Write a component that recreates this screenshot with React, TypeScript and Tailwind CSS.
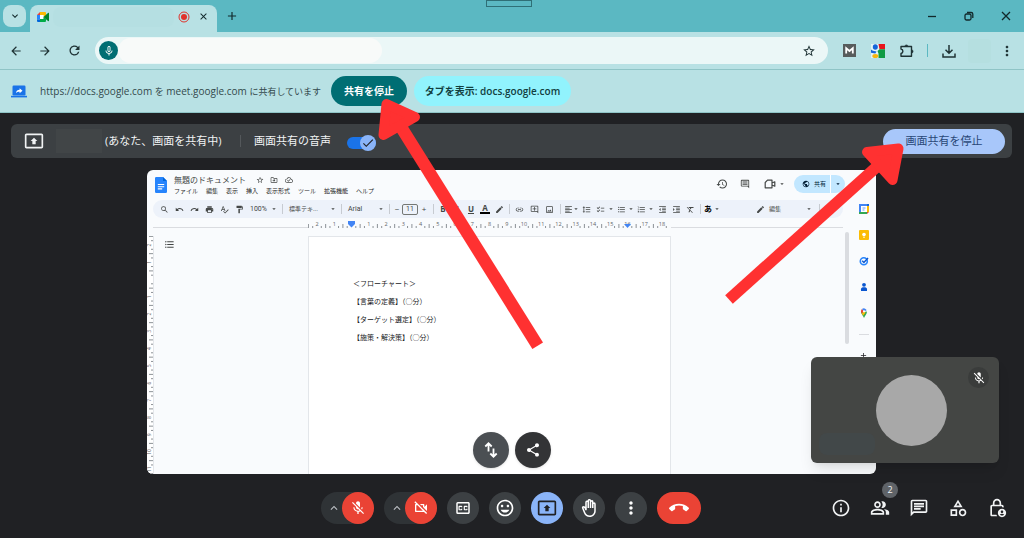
import React from 'react';
import {
  MdAdd,
  MdArrowBack,
  MdArrowDropDown,
  MdArrowForward,
  MdCallEnd,
  MdCheck,
  MdChecklist,
  MdClose,
  MdCreate,
  MdExpandLess,
  MdExpandMore,
  MdFormatAlignLeft,
  MdFormatClear,
  MdFormatIndentDecrease,
  MdFormatIndentIncrease,
  MdFormatLineSpacing,
  MdFormatListBulleted,
  MdFormatListNumbered,
  MdFormatPaint,
  MdHistory,
  MdInfoOutline,
  MdInsertEmoticon,
  MdLink,
  MdMicNone,
  MdMicOff,
  MdMoreVert,
  MdOutlineAddComment,
  MdOutlineBackHand,
  MdOutlineCategory,
  MdOutlineChat,
  MdOutlineClosedCaption,
  MdOutlineCloudDone,
  MdOutlineComment,
  MdOutlineDriveFileMove,
  MdOutlineImage,
  MdOutlineLockPerson,
  MdOutlinePeopleAlt,
  MdOutlinePresentToAll,
  MdOutlineVideocamOff,
  MdPrint,
  MdPublic,
  MdRedo,
  MdRefresh,
  MdSearch,
  MdShare,
  MdSpellcheck,
  MdStarBorder,
  MdUndo,
} from 'react-icons/md';
import type { IconType } from 'react-icons';

interface IconButtonProps {
  label: string;
  className?: string;
  children: React.ReactNode;
}

const IconButton: React.FC<IconButtonProps> = ({ label, className = '', children }) => (
  <button type="button" aria-label={label} className={`flex shrink-0 items-center justify-center ${className}`}>
    {children}
  </button>
);

const MeetLogo: React.FC = () => (
  <svg viewBox="0 0 24 20" className="h-[10px] w-3" aria-hidden="true">
    <path d="M0 6 6 0v6z" fill="#ea4335" />
    <path d="M0 6h6v9H0z" fill="#2684fc" />
    <path d="M0 15h6v5H2a2 2 0 0 1-2-2z" fill="#0066da" />
    <path d="M6 0h10a2 2 0 0 1 2 2v5l-5 4V6H6z" fill="#ffba00" />
    <path d="M6 6h7v8H6z" fill="#fff" />
    <path d="M6 14h7v-4l5 4v4a2 2 0 0 1-2 2H6z" fill="#00ac47" />
    <path d="m13 10 9-8c1-1 2 0 2 1v14c0 1-1 2-2 1z" fill="#00832d" />
  </svg>
);

const TabStrip: React.FC = () => (
  <header className="relative flex h-8 items-end bg-[#5bb8c2] text-[#12292b]">
    <IconButton label="タブを検索" className="mb-[5px] ml-[3px] h-[22px] w-[23px] rounded-lg bg-[#b8e1e4]">
      <MdExpandMore className="h-3 w-3" />
    </IconButton>
    <div className="ml-1 flex h-[27px] w-[187px] items-center rounded-t-lg bg-[#b8e1e4] pb-1 pl-[7px] pr-2">
      <MeetLogo />
      <span className="ml-1 h-5 flex-1 rounded-lg bg-[#b5dfe2]" />
      <svg viewBox="0 0 12 12" className="ml-1 h-3 w-3" aria-hidden="true">
        <circle cx="6" cy="6" r="5" fill="none" stroke="#e0322b" strokeWidth="1" />
        <circle cx="6" cy="6" r="3" fill="#e0322b" />
      </svg>
      <IconButton label="タブを閉じる" className="ml-2">
        <MdClose className="h-[11px] w-[11px]" />
      </IconButton>
    </div>
    <IconButton label="新しいタブ" className="mb-[9px] ml-2">
      <MdAdd className="h-[14px] w-[14px]" />
    </IconButton>
    <div className="mb-[11px] ml-auto mr-[13px] flex items-center gap-[27px]">
      <IconButton label="最小化">
        <svg viewBox="0 0 10 10" className="h-[10px] w-[10px]" stroke="currentColor" strokeWidth="1.3">
          <path d="M1 5.5h8" />
        </svg>
      </IconButton>
      <IconButton label="元に戻す">
        <svg viewBox="0 0 10 10" className="h-[10px] w-[10px]" fill="none" stroke="currentColor" strokeWidth="1.3">
          <rect x="1" y="3" width="6" height="6" rx="1.5" />
          <path d="M3 1.5h4.2A1.6 1.6 0 0 1 8.8 3v4" />
        </svg>
      </IconButton>
      <IconButton label="閉じる">
        <svg viewBox="0 0 10 10" className="h-[10px] w-[10px]" stroke="currentColor" strokeWidth="1.3">
          <path d="m1 1 8 8M9 1 1 9" />
        </svg>
      </IconButton>
    </div>
    <span className="absolute left-[486px] top-0 h-[7px] w-[46px] border border-[#2f6f76]" />
  </header>
);

const Toolbar: React.FC = () => (
  <nav className="flex h-[38px] items-center border-b border-[#8fc4c6] bg-[#b8e1e4] pl-[9px] pr-[9px] text-[#1f3335]">
    <div className="flex gap-[15px]">
      <IconButton label="戻る">
        <MdArrowBack className="h-[14px] w-[14px]" />
      </IconButton>
      <IconButton label="進む">
        <MdArrowForward className="h-[14px] w-[14px]" />
      </IconButton>
      <IconButton label="再読み込み">
        <MdRefresh className="h-[15px] w-[15px]" />
      </IconButton>
    </div>
    <div className="ml-[13px] flex h-[27px] min-w-0 flex-1 items-center rounded-full bg-[#ebf7f7] pl-1 pr-3">
      <span className="flex h-[19px] w-[19px] items-center justify-center rounded-full bg-[#006e73] text-white">
        <MdMicNone className="h-3 w-3" />
      </span>
      <input aria-label="アドレスバー" className="h-[25px] w-[264px] rounded-full bg-[#f8faf9] outline-none" />
      <IconButton label="ブックマーク" className="ml-auto">
        <MdStarBorder className="h-[14px] w-[14px]" />
      </IconButton>
    </div>
    <div className="ml-[15px] flex items-center">
      <svg viewBox="0 0 13 13" className="h-[13px] w-[13px]" aria-hidden="true">
        <rect width="13" height="13" fill="#575c5c" />
        <path d="M3.2 9.5V4.2L6.5 7l3.3-2.8v5.3" fill="none" stroke="#fff" strokeWidth="1.8" />
      </svg>
      <svg viewBox="0 0 14 14" className="ml-[15px] h-[14px] w-[14px]" aria-hidden="true">
        <path d="M0 0h14v14H0z" fill="#e4f3f5" />
        <path d="M7.5 0H14v5.200H8.500z" fill="#e8141c" />
        <path d="M14 5.200V14H7.500V9.500L6.500 7l2-1.800z" fill="#109a44" />
        <ellipse cx="4.300" cy="3" rx="2.500" ry="2.800" fill="#1565d8" />
        <path d="M0 5.500c2 1.800 4 1.500 5.500 2L4.300 9.500 0 8.800z" fill="#1565d8" />
        <ellipse cx="4.300" cy="11.900" rx="3" ry="2" fill="#f6b50e" />
      </svg>
      <IconButton label="拡張機能" className="ml-[15px]">
        <svg viewBox="0 0 14 14" className="h-[14px] w-[14px]" fill="none" stroke="currentColor" strokeWidth="1.4">
          <path d="M1 2.5h10.5v9.8H1V9.5c2.5-.5 2.5-4 0-4.5z" strokeLinejoin="round" />
          <path d="M4.8 2.5a1.6 1.6 0 0 1 3.2 0zM11.5 5.8a1.6 1.6 0 0 1 0 3.2z" fill="currentColor" strokeWidth="0.6" />
        </svg>
      </IconButton>
      <span className="ml-[13px] h-[13px] w-px bg-[#5bb8c2]" />
      <IconButton label="ダウンロード" className="ml-[14px]">
        <svg viewBox="0 0 14 14" className="h-[14px] w-[14px]" fill="none" stroke="currentColor" strokeWidth="1.5">
          <path d="M7 1v8M3.5 5.8 7 9.3l3.5-3.5M1 9.5V13h12V9.5" />
        </svg>
      </IconButton>
      <span className="ml-3 h-6 w-[23px] rounded-sm bg-[#b5dfe0]" />
      <IconButton label="メニュー" className="ml-2">
        <MdMoreVert className="h-4 w-4" />
      </IconButton>
    </div>
  </nav>
);

const ShareInfoBar: React.FC = () => (
  <div className="flex h-[43px] items-center border-b border-[#8fc4c6] bg-[#b8e1e4] pl-[11px] text-[#33494c]">
    <svg viewBox="0 0 16 13" className="h-[13px] w-4" aria-hidden="true">
      <rect x="1.5" y="0.5" width="13" height="10" rx="1.2" fill="#1a73e8" />
      <rect y="10.8" width="16" height="1.6" fill="#1a73e8" />
      <path d="M5 8c.3-2.2 1.6-3.2 3.6-3.3V3.2L11.5 5.7 8.6 8.2V6.7C7 6.7 5.9 7 5 8z" fill="#fff" />
    </svg>
    <p className="ml-[13px] w-[278px] whitespace-nowrap text-[10px] leading-4">
      https://docs.google.com <span className="text-[9px]">を</span> meet.google.com{' '}
      <span className="text-[9px]">に共有しています</span>
    </p>
    <button
      type="button"
      className="ml-[13px] h-[30px] w-[76px] whitespace-nowrap rounded-full bg-[#006e73] text-[10px] font-bold text-white"
    >
      共有を停止
    </button>
    <button
      type="button"
      className="ml-[7px] h-[30px] w-[157px] whitespace-nowrap rounded-full bg-[#91f3fd] text-[10px] font-semibold text-[#12403f]"
    >
      タブを表示: docs.google.com
    </button>
  </div>
);

const PresentingBar: React.FC = () => (
  <div className="ml-[11px] mr-3 mt-[11px] flex h-[34px] items-center rounded-md bg-[#3c4043] pl-[13px] pr-[7px] text-[11px] leading-4 text-[#f1f3f4]">
    <MdOutlinePresentToAll className="h-5 w-5" />
    <span className="ml-3 h-6 w-[46px] bg-[#414547]" />
    <span className="ml-[3px] w-[127px] whitespace-nowrap">(あなた、画面を共有中)</span>
    <span className="ml-2 h-3 w-px bg-[#54585b]" />
    <label className="ml-[13px] flex items-center">
      画面共有の音声
      <input type="checkbox" defaultChecked className="peer sr-only" />
      <span className="ml-4 mt-1 flex h-3 w-[29px] items-center justify-end rounded-full bg-[#1a73e8]">
        <span className="flex h-4 w-4 shrink-0 items-center justify-center rounded-full bg-[#8ab4f8] text-[#202124]">
          <MdCheck className="h-[14px] w-[14px]" />
        </span>
      </span>
    </label>
    <button type="button" className="ml-auto h-[25px] w-[122px] rounded-full bg-[#a8c7fa] text-[#284777]">
      画面共有を停止
    </button>
  </div>
);

const docMenus = ['ファイル', '編集', '表示', '挿入', '表示形式', 'ツール', '拡張機能', 'ヘルプ'];

const DocHeader: React.FC = () => (
  <div className="flex h-[30px] items-start pl-2 pr-[31px] text-[#444746]">
    <svg viewBox="0 0 12 16" className="mt-[7px] h-4 w-3" aria-hidden="true">
      <path d="M1.2 0H8l4 4v10.8a1.2 1.2 0 0 1-1.2 1.2H1.2A1.2 1.2 0 0 1 0 14.800V1.2A1.2 1.2 0 0 1 1.2 0z" fill="#2684fc" />
      <path d="M8 0l4 4H8z" fill="#0066da" />
      <path d="M2.8 7.5h6.4M2.8 9.7h6.4M2.8 11.9h4.4" stroke="#fff" strokeWidth="1.1" />
    </svg>
    <div className="ml-[7px] mt-1">
      <div className="flex h-[11px] items-center">
        <h1 className="whitespace-nowrap text-[8px] leading-3">無題のドキュメント</h1>
        <MdStarBorder className="ml-[10px] h-2 w-2" />
        <MdOutlineDriveFileMove className="ml-[6px] h-2 w-2" />
        <MdOutlineCloudDone className="ml-[7px] h-2 w-2" />
      </div>
      <ul className="flex gap-2 whitespace-nowrap text-[6px] leading-3 text-[#1f1f1f]">
        {docMenus.map((menu) => (
          <li key={menu}>{menu}</li>
        ))}
      </ul>
    </div>
    <div className="ml-auto mt-[5px] flex h-[18px] items-center">
      <MdHistory className="h-3 w-3" />
      <MdOutlineComment className="ml-3 h-[10px] w-[10px]" />
      <svg viewBox="0 0 12 10" className="ml-[14px] h-[10px] w-3" fill="none" stroke="currentColor" strokeWidth="1.2">
        <path d="M3.5 1.2H8v7.6H1.2V3.5zM8 4l2.8-1.2v4.400L8 6" strokeLinejoin="round" />
      </svg>
      <MdArrowDropDown className="ml-[2px] h-2 w-2" />
      <div className="ml-2 flex h-[18px] overflow-hidden rounded-full bg-[#c2e7ff] text-[#001d35]">
        <button type="button" className="flex w-9 items-center gap-1 pl-2 text-[6px]">
          <MdPublic className="h-2 w-2 shrink-0" />
          <span className="whitespace-nowrap">共有</span>
        </button>
        <IconButton label="共有オプション" className="w-[15px] border-l border-white">
          <MdArrowDropDown className="h-2 w-2" />
        </IconButton>
      </div>
    </div>
  </div>
);

const Caret: React.FC<{ className?: string }> = ({ className = 'w-2' }) => (
  <span className={`flex shrink-0 justify-center ${className}`}>
    <MdArrowDropDown className="h-2 w-2 shrink-0" />
  </span>
);

const Divider: React.FC = () => (
  <span className="flex w-[6px] shrink-0 justify-center">
    <span className="h-[10px] w-px bg-[#c7cbd1]" />
  </span>
);

const Tool: React.FC<{ icon: IconType; label: string; className?: string }> = ({
  icon: Icon,
  label,
  className = 'w-[15px]',
}) => (
  <IconButton label={label} className={className}>
    <Icon className="h-[9px] w-[9px] shrink-0" />
  </IconButton>
);

const DocToolbar: React.FC = () => (
  <div className="ml-[6px] mr-2 flex h-[18px] items-center whitespace-nowrap rounded-full bg-[#edf2fa] pl-1 pr-[6px] text-[6px] leading-3 text-[#444746]">
    <Tool icon={MdSearch} label="検索" />
    <Tool icon={MdUndo} label="元に戻す" />
    <Tool icon={MdRedo} label="やり直し" />
    <Tool icon={MdPrint} label="印刷" />
    <Tool icon={MdSpellcheck} label="スペルチェック" />
    <Tool icon={MdFormatPaint} label="書式を貼り付け" />
    <span className="w-[22px] shrink-0 pl-[3px] font-['Roboto'] text-[7px]">100%</span>
    <Caret className="w-[10px]" />
    <Divider />
    <span className="w-[43px] shrink-0 pl-1">標準テキ...</span>
    <Caret className="w-[10px]" />
    <Divider />
    <span className="w-8 shrink-0 pl-1 font-['Roboto'] text-[7px]">Arial</span>
    <Caret className="w-[10px]" />
    <Divider />
    <span className="w-[10px] shrink-0 text-center text-[8px]">−</span>
    <input
      aria-label="フォントサイズ"
      defaultValue="11"
      className="h-[11px] w-4 shrink-0 rounded-[2px] border border-[#747775] text-center font-['Roboto'] text-[7px]"
    />
    <span className="w-3 shrink-0 text-center text-[8px]">+</span>
    <Divider />
    <b className="w-[14px] shrink-0 text-center text-[8px]">B</b>
    <i className="w-[14px] shrink-0 text-center text-[8px] font-bold">I</i>
    <u className="w-[14px] shrink-0 text-center text-[8px] font-bold">U</u>
    <span className="flex w-[14px] shrink-0 justify-center">
      <b className="w-[10px] border-b-2 border-black text-center text-[8px] leading-[8px]">A</b>
    </span>
    <Tool icon={MdCreate} label="ハイライト" className="w-[14px]" />
    <Divider />
    <Tool icon={MdLink} label="リンク" />
    <Tool icon={MdOutlineAddComment} label="コメントを追加" />
    <Tool icon={MdOutlineImage} label="画像" />
    <Divider />
    <Tool icon={MdFormatAlignLeft} label="配置" className="w-[10px]" />
    <Caret className="w-[6px]" />
    <Tool icon={MdFormatLineSpacing} label="行間隔" className="w-[14px]" />
    <Tool icon={MdChecklist} label="チェックリスト" className="w-[14px]" />
    <Caret />
    <Tool icon={MdFormatListBulleted} label="箇条書き" className="w-3" />
    <Caret />
    <Tool icon={MdFormatListNumbered} label="番号付きリスト" className="w-3" />
    <Caret />
    <Tool icon={MdFormatIndentDecrease} label="インデント減" className="w-[14px]" />
    <Tool icon={MdFormatIndentIncrease} label="インデント増" className="w-[14px]" />
    <Tool icon={MdFormatClear} label="書式をクリア" className="w-[14px]" />
    <Divider />
    <b className="w-[10px] shrink-0 text-center text-[8px] text-black">あ</b>
    <Caret />
    <span className="flex-1" />
    <Tool icon={MdCreate} label="編集モード" className="w-3" />
    <span className="w-[38px] shrink-0 pl-[3px]">編集</span>
    <Caret className="w-[10px]" />
    <span className="w-[2px]" />
    <Divider />
    <Tool icon={MdExpandLess} label="メニューを非表示" />
  </div>
);

const rulerLabels = ['2', '1', '', ...Array.from({ length: 18 }, (_, i) => String(i + 1))];
const STEP = 17.25;

const HorizontalRuler: React.FC = () => (
  <svg viewBox="0 0 363 10" className="h-[10px] w-[363px] shrink-0" aria-hidden="true">
    {rulerLabels.map((label, i) => (
      <g key={i} stroke="#80868b" strokeWidth="0.9">
        <path d={`M${9 + i * STEP - 8.6} 6v4M${9 + i * STEP - 4.3} 8v2M${9 + i * STEP + 4.3} 8v2`} />
        <text x={9 + i * STEP} y="8" textAnchor="middle" fontSize="5.5" fill="#5f6368" stroke="none">
          {label}
        </text>
      </g>
    ))}
    <path d="M40 3h7v3l-3.5 3.5L40 6z" fill="#4285f4" />
    <path d="M316 6h7l-3.5 4z" fill="#4285f4" />
  </svg>
);

const verticalLabels = ['2', '1', '', '1', '2', '3', '4', '5', '6', '7', '8', '9', '10', '11'];

const VerticalRuler: React.FC = () => (
  <svg viewBox="0 0 6 238" className="h-[238px] w-[6px] shrink-0 bg-white" aria-hidden="true">
    {verticalLabels.map((label, i) => (
      <g key={i}>
        <path
          d={`M2 ${9 + i * STEP - 8.6}h4M4 ${9 + i * STEP - 4.3}h2M4 ${9 + i * STEP + 4.3}h2`}
          stroke="#80868b"
          strokeWidth="0.9"
        />
        <text
          x="0"
          y="0"
          textAnchor="middle"
          fontSize="5"
          fill="#5f6368"
          transform={`translate(4 ${9 + i * STEP}) rotate(-90)`}
        >
          {label}
        </text>
      </g>
    ))}
  </svg>
);

const docLines = ['＜フローチャート＞', '【言葉の定義】（○分）', '【ターゲット選定】（○分）', '【施策・解決策】（◯分）'];

const SidePanel: React.FC = () => (
  <aside className="flex w-[25px] shrink-0 flex-col items-center gap-4 pt-1">
    <svg viewBox="0 0 10 10" className="h-[10px] w-[10px]" aria-hidden="true">
      <rect x="0.5" y="0.5" width="9" height="9" fill="#fff" />
      <path d="M0 0h8v2H2v6H0z" fill="#4285f4" />
      <path d="M8 0h2v2H8z" fill="#1967d2" />
      <path d="M8 2h2v6H8z" fill="#fbbc04" />
      <path d="M0 8h8v2H0z" fill="#34a853" />
      <path d="M8 8h2l-2 2z" fill="#ea4335" />
      <path d="M3.5 4h3M3.5 6h2" stroke="#4285f4" strokeWidth="0.8" />
    </svg>
    <svg viewBox="0 0 10 10" className="h-[10px] w-[10px]" aria-hidden="true">
      <rect width="10" height="10" rx="1" fill="#fbbc04" />
      <circle cx="5" cy="4.5" r="1.8" fill="#fff" />
      <path d="M4.2 7.2h1.6" stroke="#fff" strokeWidth="1" />
    </svg>
    <svg viewBox="0 0 10 10" className="h-[10px] w-[10px]" aria-hidden="true">
      <circle cx="4.8" cy="5.2" r="3.5" fill="none" stroke="#2684fc" strokeWidth="1.6" />
      <path d="m3.2 4.8 1.7 1.7L9 2" fill="none" stroke="#0b57d0" strokeWidth="1.5" />
    </svg>
    <svg viewBox="0 0 10 10" className="h-[10px] w-[10px]" fill="#0b57d0" aria-hidden="true">
      <circle cx="5" cy="2.8" r="1.9" />
      <path d="M2 9V7.2C2 5.800 3.200 5.200 5 5.200s3 .6 3 2V9z" />
    </svg>
    <svg viewBox="0 0 10 10" className="h-[10px] w-[10px]" aria-hidden="true">
      <path d="M5 10C4 7.5 2 6 2 3.5h3z" fill="#34a853" />
      <path d="M5 10c1-2.500 3-4 3-6.500L5 4z" fill="#34a853" />
      <path d="M2 3.5A3 3 0 0 1 3 1l2 2.5-2.2 2C2.3 5 2 4.200 2 3.5z" fill="#ea4335" />
      <path d="M3 1a3 3 0 0 1 4.7 1.2L5 3.5z" fill="#4285f4" />
      <path d="M2.8 5.5 5 3.5l1.5 1.2-2.4 3z" fill="#fbbc04" />
      <circle cx="5" cy="3.3" r="1.1" fill="#fff" />
    </svg>
    <span className="h-px w-[10px] bg-[#dadce0]" />
    <MdAdd className="h-[9px] w-[9px] text-[#202124]" />
  </aside>
);

const SharedDocument: React.FC = () => (
  <div className="relative ml-[147px] mr-[148px] mt-3 flex flex-col overflow-hidden rounded-md bg-[#f9fbfd]">
    <DocHeader />
    <div className="flex">
      <div className="min-w-0 flex-1">
        <DocToolbar />
        <div className="flex items-end">
          <span className="ml-[6px] w-[155px] border-b border-[#dadce0]" />
          <HorizontalRuler />
          <span className="mr-2 flex-1 border-b border-[#dadce0]" />
        </div>
        <div className="mt-2 flex">
          <VerticalRuler />
          <div className="w-[155px] shrink-0 border-l border-[#e3e6ea] pl-[10px] pt-[3px] text-[#444746]">
            <MdFormatListBulleted className="h-[11px] w-[11px]" />
          </div>
          <div className="min-w-0 flex-1 border border-b-0 border-[#e3e6ea] bg-white pl-11 pt-[38px] text-[7px] leading-[18px] text-[#202124]">
            {docLines.map((line) => (
              <p key={line} className="whitespace-nowrap">
                {line}
              </p>
            ))}
          </div>
          <div className="flex w-[180px] shrink-0 justify-end">
            <span className="-mt-1 mr-[2px] h-28 w-1 rounded-full bg-[#dadce0]" />
          </div>
        </div>
      </div>
      <SidePanel />
    </div>
    <div className="absolute bottom-[6px] left-1/2 flex -translate-x-1/2 gap-[6px] text-white">
      <IconButton label="スクロール" className="h-9 w-9 rounded-full bg-[#4b4f53] shadow">
        <svg viewBox="0 0 14 16" className="h-4 w-[14px]" fill="none" stroke="currentColor" strokeWidth="1.8">
          <path d="M4.5 9.500V1.500M1.3 4.500l3.2-3.200 3.2 3.200M9.5 6.500v8M6.3 11.500l3.2 3.200 3.2-3.200" />
        </svg>
      </IconButton>
      <IconButton label="共有" className="h-9 w-9 rounded-full bg-[#333436] shadow">
        <MdShare className="h-4 w-4" />
      </IconButton>
    </div>
  </div>
);

const SelfView: React.FC = () => (
  <div className="absolute bottom-[11px] right-[25px] flex h-[106px] w-[188px] items-center justify-center rounded-md bg-[#444644] pl-[13px] shadow-lg">
    <span className="h-[71px] w-[71px] rounded-full bg-[#a8a8a8]" />
    <span className="absolute bottom-2 left-2 h-[22px] w-[56px] rounded-lg bg-[#424849]" />
    <span className="absolute right-[10px] top-[10px] flex h-[21px] w-[21px] items-center justify-center rounded-full bg-[#3a3c3b] text-white">
      <MdMicOff className="h-[14px] w-[14px]" />
    </span>
  </div>
);

const DeviceControl: React.FC<{ icon: IconType; label: string }> = ({ icon: Icon, label }) => (
  <div className="flex rounded-full bg-[#2f3336]">
    <IconButton label={`${label}の設定`} className="w-[21px] pl-1 text-[#bdc1c6]">
      <MdExpandLess className="h-[14px] w-[14px]" />
    </IconButton>
    <IconButton label={label} className="h-8 w-8 rounded-full bg-[#ea4335] text-white">
      <Icon className="h-4 w-4" />
    </IconButton>
  </div>
);

const callControls: { icon: IconType; label: string; tone: string; size: string }[] = [
  { icon: MdOutlineClosedCaption, label: '字幕', tone: 'bg-[#3c4043] text-white', size: 'h-[18px] w-[18px]' },
  { icon: MdInsertEmoticon, label: 'リアクション', tone: 'bg-[#3c4043] text-white', size: 'h-5 w-5' },
  { icon: MdOutlinePresentToAll, label: '画面共有', tone: 'bg-[#8ab4f8] text-[#202124]', size: 'h-5 w-5' },
  { icon: MdOutlineBackHand, label: '挙手', tone: 'bg-[#3c4043] text-white', size: 'h-[18px] w-[18px]' },
  { icon: MdMoreVert, label: 'その他', tone: 'bg-[#3c4043] text-white', size: 'h-5 w-5' },
];

const panelControls: { icon: IconType; label: string; badge?: string }[] = [
  { icon: MdInfoOutline, label: '詳細' },
  { icon: MdOutlinePeopleAlt, label: '参加者', badge: '2' },
  { icon: MdOutlineChat, label: 'チャット' },
  { icon: MdOutlineCategory, label: 'アクティビティ' },
  { icon: MdOutlineLockPerson, label: 'ホスト用ボタン' },
];

const CallBar: React.FC = () => (
  <footer className="grid h-16 grid-cols-[1fr_auto_1fr] items-center pr-[2px] pt-[3px]">
    <span />
    <div className="flex gap-[10px]">
      <DeviceControl icon={MdMicOff} label="マイク" />
      <DeviceControl icon={MdOutlineVideocamOff} label="カメラ" />
      {callControls.map(({ icon: Icon, label, tone, size }) => (
        <IconButton key={label} label={label} className={`h-8 w-8 rounded-full ${tone}`}>
          <Icon className={size} />
        </IconButton>
      ))}
      <IconButton label="通話から退出" className="h-8 w-11 rounded-full bg-[#ea4335] text-white">
        <MdCallEnd className="h-5 w-5" />
      </IconButton>
    </div>
    <div className="flex justify-end gap-[19px] pr-[15px] text-[#f1f3f4]">
      {panelControls.map(({ icon: Icon, label, badge }) => (
        <IconButton key={label} label={label} className="relative">
          <Icon className="h-5 w-5" />
          {badge && (
            <span className="absolute -right-2 -top-4 flex h-4 w-4 items-center justify-center rounded-full bg-[#5f6368] text-[9px] leading-none">
              {badge}
            </span>
          )}
        </IconButton>
      ))}
    </div>
  </footer>
);

const PointerArrows: React.FC = () => (
  <svg
    viewBox="0 0 1024 538"
    className="pointer-events-none absolute left-0 top-0 h-[538px] w-[1024px]"
    fill="#ff3131"
    stroke="#ff3131"
    strokeLinejoin="round"
    aria-hidden="true"
  >
    <path d="M401 127 537.7 345.7" strokeWidth="12.5" />
    <path d="M386.5 104 415 117 383.5 135z" strokeWidth="10" />
    <path d="M729 299.5 881 163" strokeWidth="11.5" />
    <path d="M898.5 148.5 867 152 892.5 180z" strokeWidth="10" />
  </svg>
);

const App: React.FC = () => {
  return (
    <div className="relative flex min-h-screen flex-col overflow-hidden bg-[#202124] font-['Open_Sans','Noto_Sans_CJK_JP',sans-serif]">
      <TabStrip />
      <Toolbar />
      <ShareInfoBar />
      <main className="relative">
        <PresentingBar />
        <SharedDocument />
        <SelfView />
      </main>
      <CallBar />
      <PointerArrows />
    </div>
  );
};

export default App;
